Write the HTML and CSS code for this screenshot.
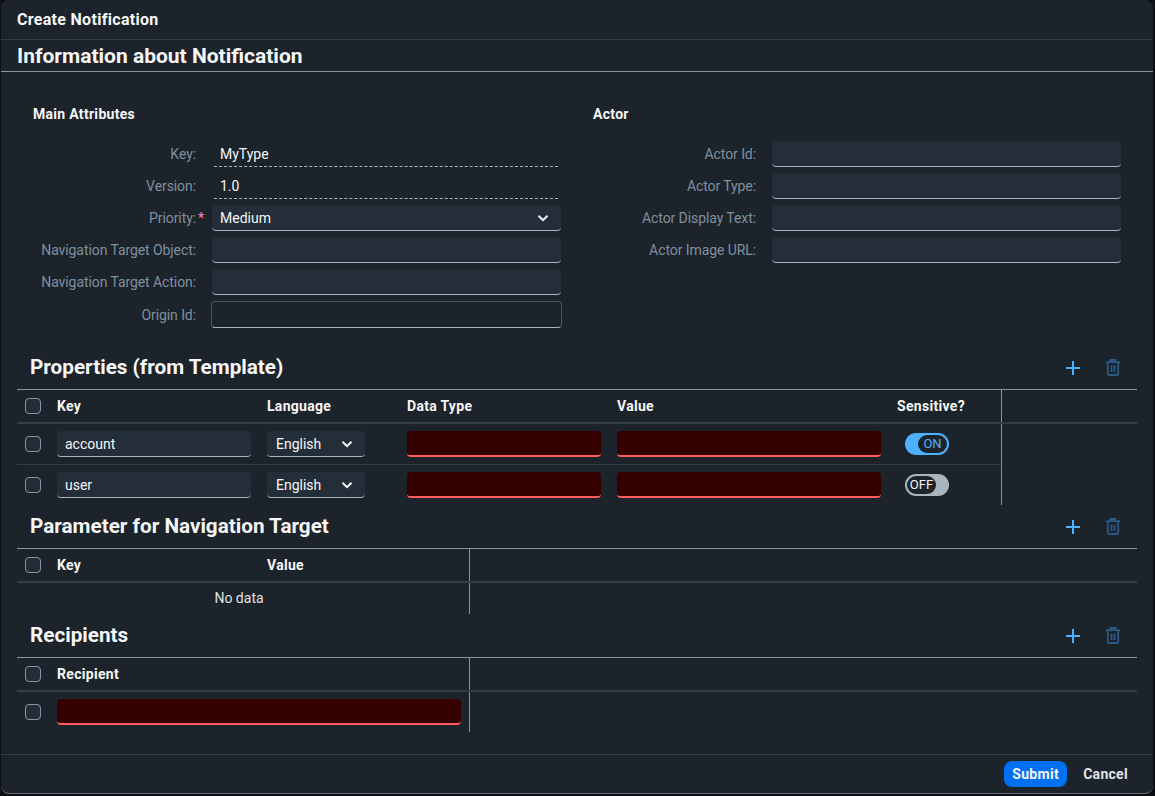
FILE: index.html
```html
<!DOCTYPE html>
<html lang="en">
  <head>
    <meta charset="UTF-8" />
    <meta name="viewport" content="width=device-width, initial-scale=1.0" />
    <title>Create Notification</title>
    <link rel="stylesheet" href="styles.css">
  </head>
  <body>
    <svg class="defs" width="0" height="0">
      <symbol id="chevron" viewBox="0 0 12 12"><path d="M1.500 3.800 6 8.200l4.500-4.400" fill="none" stroke="currentColor" stroke-width="2"/></symbol>
      <symbol id="plus" viewBox="0 0 16 16"><path d="M1 8h14M8 1v14" fill="none" stroke="currentColor" stroke-width="2"/></symbol>
      <symbol id="trash" viewBox="0 0 16 17"><path d="M1 3.200h14M5.500 3.200V1h5v2.200M2.800 3.200V14.500a1.500 1.500 0 0 0 1.500 1.500h7.400a1.500 1.500 0 0 0 1.500-1.500V3.200M6.500 6.500v6.500M9.500 6.500v6.500" fill="none" stroke="currentColor" stroke-width="1.800"/></symbol>
    </svg>

    <div class="dialog">
      <header class="dialog-header">Create Notification</header>
      <h2 class="page-title">Information about Notification</h2>

      <div class="form">
        <section class="form-col">
          <h3>Main Attributes</h3>
          <div class="form-row">
            <label>Key:</label>
            <div class="readonly">MyType</div>
          </div>
          <div class="form-row">
            <label>Version:</label>
            <div class="readonly">1.0</div>
          </div>
          <div class="form-row">
            <label>Priority:<span class="required">*</span></label>
            <div class="select">Medium <svg><use href="#chevron"/></svg></div>
          </div>
          <div class="form-row">
            <label>Navigation Target Object:</label>
            <input type="text" />
          </div>
          <div class="form-row">
            <label>Navigation Target Action:</label>
            <input type="text" />
          </div>
          <div class="form-row">
            <label>Origin Id:</label>
            <input type="text" class="focused" />
          </div>
        </section>
        <section class="form-col">
          <h3>Actor</h3>
          <div class="form-row">
            <label>Actor Id:</label>
            <input type="text" />
          </div>
          <div class="form-row">
            <label>Actor Type:</label>
            <input type="text" />
          </div>
          <div class="form-row">
            <label>Actor Display Text:</label>
            <input type="text" />
          </div>
          <div class="form-row">
            <label>Actor Image URL:</label>
            <input type="text" />
          </div>
        </section>
      </div>

      <div class="section-head">
        <h2>Properties (from Template)</h2>
        <button class="icon-btn add"><svg><use href="#plus"/></svg></button>
        <button class="icon-btn del"><svg><use href="#trash"/></svg></button>
      </div>
      <table>
        <colgroup>
          <col class="c-sel" /><col class="c-210" /><col class="c-140" /><col class="c-210" /><col class="c-280" /><col class="c-112" /><col />
        </colgroup>
        <thead>
          <tr>
            <th><span class="check"></span></th>
            <th>Key</th>
            <th>Language</th>
            <th>Data Type</th>
            <th>Value</th>
            <th class="end">Sensitive?</th>
            <th></th>
          </tr>
        </thead>
        <tbody>
          <tr>
            <td><span class="check"></span></td>
            <td><input type="text" value="account" /></td>
            <td><div class="select small">English <svg><use href="#chevron"/></svg></div></td>
            <td><input type="text" class="error" /></td>
            <td><input type="text" class="error" /></td>
            <td class="end toggle-cell"><div class="toggle on"><span>ON</span></div></td>
            <td class="filler"></td>
          </tr>
          <tr>
            <td><span class="check"></span></td>
            <td><input type="text" value="user" /></td>
            <td><div class="select small">English <svg><use href="#chevron"/></svg></div></td>
            <td><input type="text" class="error" /></td>
            <td><input type="text" class="error" /></td>
            <td class="end toggle-cell"><div class="toggle off"><span>OFF</span></div></td>
            <td class="filler"></td>
          </tr>
        </tbody>
      </table>

      <div class="section-head">
        <h2>Parameter for Navigation Target</h2>
        <button class="icon-btn add"><svg><use href="#plus"/></svg></button>
        <button class="icon-btn del"><svg><use href="#trash"/></svg></button>
      </div>
      <table>
        <colgroup>
          <col class="c-sel" /><col class="c-210" /><col class="c-210" /><col />
        </colgroup>
        <thead>
          <tr>
            <th><span class="check"></span></th>
            <th>Key</th>
            <th class="end">Value</th>
            <th></th>
          </tr>
        </thead>
        <tbody>
          <tr class="no-data">
            <td colspan="3" class="end">No data</td>
            <td class="filler"></td>
          </tr>
        </tbody>
      </table>

      <div class="section-head">
        <h2>Recipients</h2>
        <button class="icon-btn add"><svg><use href="#plus"/></svg></button>
        <button class="icon-btn del"><svg><use href="#trash"/></svg></button>
      </div>
      <table>
        <colgroup>
          <col class="c-sel" /><col class="c-420" /><col />
        </colgroup>
        <thead>
          <tr>
            <th><span class="check"></span></th>
            <th class="end">Recipient</th>
            <th></th>
          </tr>
        </thead>
        <tbody>
          <tr>
            <td><span class="check"></span></td>
            <td class="end"><input type="text" class="error" /></td>
            <td class="filler"></td>
          </tr>
        </tbody>
      </table>

      <footer class="dialog-footer">
        <button class="btn primary">Submit</button>
        <button class="btn">Cancel</button>
      </footer>
    </div>
  </body>
</html>
```

FILE: styles.css
```css
* {
  box-sizing: border-box;
}
html,
body {
  height: 100%;
}
body {
  margin: 0;
  padding: 0 2px 2px 1px;
  overflow: hidden;
  background-color: #0d1013;
  color: #f5f6f7;
  font-family: Roboto, "Liberation Sans", sans-serif;
  font-size: 14px;
}
.defs {
  display: block;
}
h2,
h3 {
  margin: 0;
}
.dialog {
  display: flex;
  flex-direction: column;
  height: 794px;
  background-color: #1d232a;
  border-radius: 8px;
  border-bottom: 1px solid #66727e;
}
.dialog-header {
  height: 40px;
  padding: 0 16px;
  font-size: 16px;
  font-weight: 700;
  line-height: 40px;
  letter-spacing: 0.3px;
  border-bottom: 1px solid #343c45;
}
.page-title {
  height: 32px;
  padding: 0 16px;
  font-size: 21px;
  font-weight: 700;
  line-height: 33px;
  border-bottom: 1px solid #8396a8;
}

/* form */
.form {
  display: grid;
  grid-template-columns: 560px 560px;
  margin: 0 16px;
  height: 274px;
  padding-top: 34px;
}
.form-col {
  padding: 0 16px;
}
.form-col h3 {
  height: 16px;
  margin-bottom: 19px;
  font-size: 14px;
  line-height: 16px;
  letter-spacing: 0.3px;
}
.form-row {
  display: grid;
  grid-template-columns: 163px 349px;
  column-gap: 16px;
  align-items: center;
  height: 26px;
  margin-bottom: 6px;
}
.form-row label {
  color: #7f8f9f;
  text-align: right;
  white-space: nowrap;
  letter-spacing: -0.08px;
}
.required {
  color: #ff88b2;
  margin-right: -8px;
  padding-left: 2px;
}
input[type="text"] {
  display: block;
  width: 100%;
  height: 26px;
  padding: 0 8px;
  border: none;
  border-bottom: 1px solid #a9b4be;
  border-radius: 4px;
  outline: none;
  background-color: #242e38;
  color: #f5f6f7;
  font: inherit;
}
input.focused {
  background-color: #1d232a;
  border: 1px solid #4a5561;
  border-bottom-color: #a9b4be;
  width: 351px;
  height: 27px;
  margin-left: -1px;
}
input.error {
  background-color: #350000;
  border-bottom: 2px solid #ff5c5c;
}
.readonly {
  height: 26px;
  margin: 0 3px 0 2px;
  padding-left: 6px;
  line-height: 26px;
  border-bottom: 1px dashed #a9b4be;
}
.select {
  display: flex;
  align-items: center;
  justify-content: space-between;
  height: 26px;
  padding: 0 12px 0 8px;
  background-color: #242e38;
  border-bottom: 1px solid #a9b4be;
  border-radius: 4px;
}
.select.small {
  width: 98px;
  padding-left: 9px;
}
.select svg {
  width: 12px;
  height: 12px;
  flex: none;
}

/* section headers */
.section-head {
  display: flex;
  align-items: center;
  height: 43px;
  margin: 0 20px 0 16px;
  padding-left: 13px;
}
.section-head h2 {
  flex: 1;
  padding-bottom: 2px;
  font-size: 20.7px;
  font-weight: 700;
}
.icon-btn {
  display: flex;
  align-items: center;
  justify-content: center;
  width: 40px;
  height: 32px;
  padding: 0;
  border: none;
  background: none;
}
.icon-btn.add {
  color: #4db1ff;
}
.icon-btn.add svg {
  width: 16px;
  height: 16px;
}
.icon-btn.del {
  color: #2a5a85;
}
.icon-btn.del svg {
  width: 16px;
  height: 17px;
}

/* tables */
table {
  width: 1120px;
  margin: 0 16px;
  flex: none;
  table-layout: fixed;
  border-collapse: separate;
  border-spacing: 0;
}
.c-sel {
  width: 32px;
}
.c-112 {
  width: 112px;
}
.c-140 {
  width: 140px;
}
.c-210 {
  width: 210px;
}
.c-280 {
  width: 280px;
}
.c-420 {
  width: 420px;
}
th {
  height: 35px;
  padding: 0 8px;
  text-align: left;
  font-weight: 700;
  letter-spacing: 0.3px;
  border-top: 1px solid #8396a8;
  border-bottom: 2px solid #343c45;
}
td {
  height: 41px;
  padding: 0 8px;
  border-bottom: 1px solid #343c45;
}
tbody tr:last-child td {
  height: 40px;
  border-bottom: none;
}
td.filler {
  border-bottom: none;
}
.end {
  box-shadow: 1px 0 0 #8396a8;
}
.check {
  display: block;
  width: 16px;
  height: 16px;
  border: 1px solid #8396a8;
  border-radius: 4px;
  background-color: #232d37;
}
tbody tr.no-data td {
  height: 31px;
  padding-right: 16px;
  padding-bottom: 2px;
  text-align: center;
  color: #e0e3e6;
}

/* toggle */
.toggle-cell {
  padding-left: 16px;
}
.toggle {
  display: flex;
  width: 44px;
  height: 22px;
  padding: 2px;
  border-radius: 11px;
  font-size: 13px;
}
.toggle span {
  display: block;
  width: 29px;
  height: 18px;
  border-radius: 9px;
  background-color: #1d232a;
  line-height: 18px;
  text-align: center;
}
.toggle.on {
  justify-content: flex-end;
  background-color: #4db1ff;
  color: #4db1ff;
}
.toggle.off {
  background-color: #a9b4be;
  color: #f5f6f7;
}

/* footer */
.dialog-footer {
  display: flex;
  justify-content: flex-end;
  align-items: center;
  margin-top: auto;
  height: 39px;
  padding: 0 9px 0 0;
  border-top: 1px solid #343c45;
}
.btn {
  height: 26px;
  padding: 0 16px;
  border: none;
  border-radius: 8px;
  background: none;
  color: #e0e3e6;
  font: inherit;
  font-weight: 700;
  letter-spacing: 0.3px;
}
.btn.primary {
  padding: 0 8px;
  width: 63px;
  background-color: #0070f2;
  color: #f5f6f7;
}
```
